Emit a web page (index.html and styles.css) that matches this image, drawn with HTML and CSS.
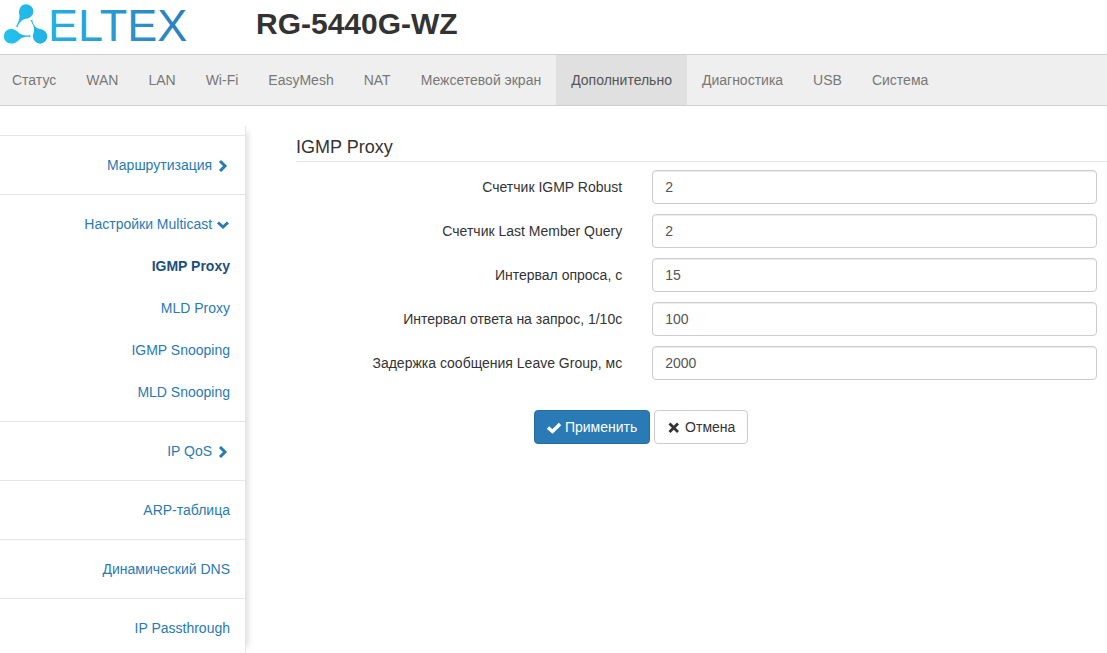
FILE: index.html
```html
<!DOCTYPE html>
<html lang="ru">
<head>
    <meta charset="UTF-8">
    <meta name="viewport" content="width=device-width, initial-scale=1.0">
    <title>RG-5440G-WZ</title>
    <link rel="stylesheet" href="styles.css">
</head>
<body>
    <header class="header">
        <a class="logo" href="#">
            <svg width="200" height="54" viewBox="0 0 200 54">
                <defs>
                    <linearGradient id="brand" gradientUnits="userSpaceOnUse" x1="4" y1="30" x2="192" y2="20">
                        <stop offset="0" stop-color="#22c1ee"/>
                        <stop offset="1" stop-color="#2c7dbd"/>
                    </linearGradient>
                </defs>
                <g fill="url(#brand)">
                    <path d="M26 4.200a7.300 7.300 0 0 1 7.300 7.300c0 4-3 6.500-7.300 7.300-4 .7-6 3.500-8.200 7.200l.2 1.500-2.300-1.400 1.100-.8c1.800-4 3-7 2.700-10-1.600-5 .8-11.100 6.500-11.100z"/>
                    <path d="M11 29c4.200 0 6 2.300 8.500 4.400 3 1.800 6 2 9.500 2l1.300-.9v3l-1.300-.7c-4 0-6.500.5-9 2.200-2.500 2.500-4.500 4.500-9 4.500a7.250 7.250 0 0 1 0-14.500z"/>
                    <path d="M30.200 20.800l2.300-1.300-.2 1.500c1.500 4 3 6.500 6.300 7.800 4.500.3 8.700 3 8.700 7.700a7.200 7.200 0 0 1-14.400 0c0-2.500 1-4 1.200-6.500.2-3.300-1.200-5.500-2.900-8.500z"/>
                </g>
                <text class="logo-text" x="48" y="41" fill="url(#brand)">ELTEX</text>
            </svg>
        </a>
        <h1 class="model">RG-5440G-WZ</h1>
    </header>

    <nav class="navbar">
        <a href="#">Статус</a>
        <a href="#">WAN</a>
        <a href="#">LAN</a>
        <a href="#">Wi-Fi</a>
        <a href="#">EasyMesh</a>
        <a href="#">NAT</a>
        <a href="#">Межсетевой экран</a>
        <a href="#" class="active">Дополнительно</a>
        <a href="#">Диагностика</a>
        <a href="#">USB</a>
        <a href="#">Система</a>
    </nav>

    <div class="content">
        <ul class="sidebar">
            <li>
                <a href="#">Маршрутизация
                    <svg class="icon" viewBox="0 0 14 14"><path d="M4 2l5 5-5 5" fill="none" stroke="currentColor" stroke-width="3"/></svg>
                </a>
            </li>
            <li>
                <a href="#">Настройки Multicast
                    <svg class="icon" viewBox="0 0 14 14"><path d="M2 4.500l5 4.500 5-4.500" fill="none" stroke="currentColor" stroke-width="3"/></svg>
                </a>
                <ul class="submenu">
                    <li><a href="#" class="active">IGMP Proxy</a></li>
                    <li><a href="#">MLD Proxy</a></li>
                    <li><a href="#">IGMP Snooping</a></li>
                    <li><a href="#">MLD Snooping</a></li>
                </ul>
            </li>
            <li>
                <a href="#">IP QoS
                    <svg class="icon" viewBox="0 0 14 14"><path d="M4 2l5 5-5 5" fill="none" stroke="currentColor" stroke-width="3"/></svg>
                </a>
            </li>
            <li><a href="#">ARP-таблица</a></li>
            <li><a href="#">Динамический DNS</a></li>
            <li><a href="#">IP Passthrough</a></li>
        </ul>

        <main class="main">
            <h2>IGMP Proxy</h2>
            <form>
                <div class="form-group">
                    <label for="robust">Счетчик IGMP Robust</label>
                    <input type="text" id="robust" value="2">
                </div>
                <div class="form-group">
                    <label for="lastMember">Счетчик Last Member Query</label>
                    <input type="text" id="lastMember" value="2">
                </div>
                <div class="form-group">
                    <label for="queryInterval">Интервал опроса, с</label>
                    <input type="text" id="queryInterval" value="15">
                </div>
                <div class="form-group">
                    <label for="responseInterval">Интервал ответа на запрос, 1/10с</label>
                    <input type="text" id="responseInterval" value="100">
                </div>
                <div class="form-group">
                    <label for="leaveDelay">Задержка сообщения Leave Group, мс</label>
                    <input type="text" id="leaveDelay" value="2000">
                </div>
                <div class="buttons">
                    <button type="submit" class="btn btn-primary">
                        <svg class="icon" viewBox="0 0 14 14"><path d="M1 6.500l4.500 4L13 3" fill="none" stroke="currentColor" stroke-width="3.400"/></svg>
                        Применить
                    </button>
                    <button type="reset" class="btn">
                        <svg class="icon" viewBox="0 0 14 14"><path d="M2.500 2.500l8.500 8.500M11 2.500L2.500 11" fill="none" stroke="currentColor" stroke-width="2.800"/></svg>
                        Отмена
                    </button>
                </div>
            </form>
        </main>
    </div>
</body>
</html>
```
FILE: styles.css
```css
* {
    box-sizing: border-box;
}

body {
    margin: 0;
    font-family: "Liberation Sans", Arial, sans-serif;
    font-size: 14px;
    line-height: 20px;
    color: #333;
    background-color: #fff;
}

a {
    color: #2a7ab5;
    text-decoration: none;
}

ul {
    list-style: none;
    margin: 0;
    padding: 0;
}

.header {
    display: flex;
    height: 54px;
}

.logo {
    width: 256px;
}

.logo-text {
    font-size: 45px;
}

.model {
    margin: 0;
    font-size: 30px;
    line-height: 48px;
}

.navbar {
    display: flex;
    background-color: #efefef;
    border-top: 1px solid #d0d0d0;
    border-bottom: 1px solid #d0d0d0;
}

.navbar a {
    padding: 15px;
    color: #777;
    white-space: nowrap;
}

.navbar a:first-child {
    padding-left: 12px;
}

.navbar .active {
    color: #555;
    background-color: #e0e0e0;
}

.content {
    display: flex;
    gap: 50px;
    padding-top: 20px;
}

.sidebar {
    flex: none;
    width: 246px;
    padding-top: 9px;
    text-align: right;
    border-right: 1px solid #e5e5e5;
    box-shadow: 8px 0 6px -6px #ddd;
}

.sidebar > li {
    padding: 19px 15px;
    border-top: 1px solid #e5e5e5;
}

.sidebar > li:last-child {
    padding-bottom: 15px;
}

.sidebar a {
    display: block;
}

.submenu li {
    margin-top: 22px;
}

.submenu .active {
    font-weight: bold;
    color: #1d4f7c;
}

.icon {
    width: 14px;
    height: 14px;
    vertical-align: -3px;
}

.main {
    flex: 1;
}

.main h2 {
    margin: 11px 0 8px;
    padding-bottom: 3px;
    font-size: 18px;
    font-weight: normal;
    line-height: 21px;
    border-bottom: 1px solid #e5e5e5;
}

.form-group {
    display: grid;
    grid-template-columns: 11fr 15fr;
    gap: 30px;
    align-items: center;
    margin: 0 10px 10px 0;
}

.form-group label {
    text-align: right;
}

.form-group input {
    width: 100%;
    height: 34px;
    padding: 6px 12px;
    font: inherit;
    color: #555;
    background-color: #fff;
    border: 1px solid #ccc;
    border-radius: 4px;
    box-shadow: inset 0 1px 1px rgba(0, 0, 0, 0.075);
}

.buttons {
    display: flex;
    gap: 4px;
    margin: 30px 0 0 238px;
}

.btn {
    padding: 6px 12px;
    font: inherit;
    color: #333;
    background-color: #fff;
    border: 1px solid #ccc;
    border-radius: 4px;
    cursor: pointer;
}

.btn-primary {
    color: #fff;
    background-color: #2a7ab5;
    border-color: #256ca1;
}
```
